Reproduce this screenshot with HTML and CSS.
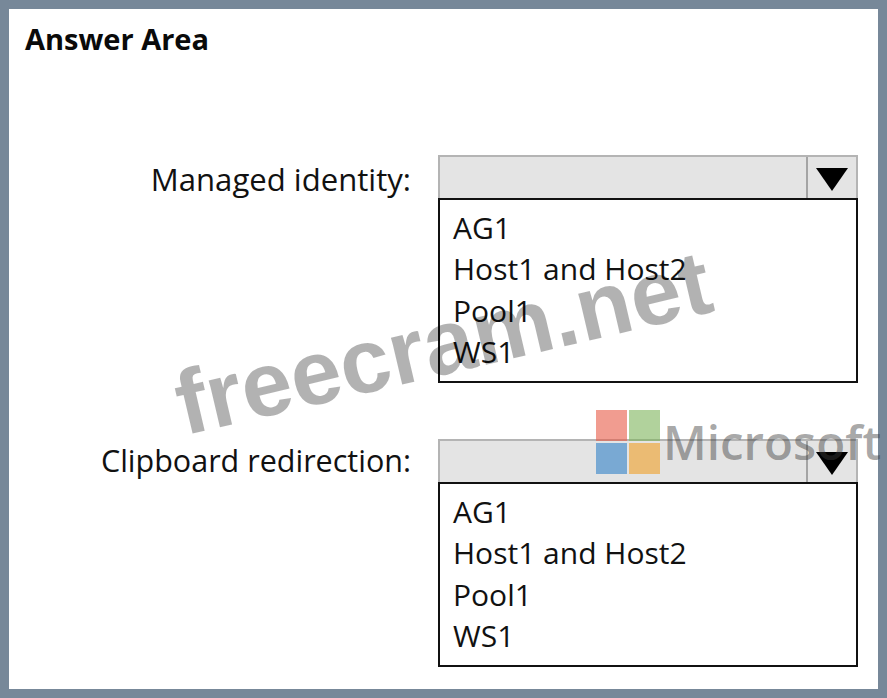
FILE: index.html
```html
<!DOCTYPE html>
<html lang="en">
<head>
    <meta charset="UTF-8">
    <meta name="viewport" content="width=device-width, initial-scale=1.0">
    <title>Answer Area</title>
    <link rel="stylesheet" href="styles.css">
</head>
<body>
    <div class="frame">
        <h1>Answer Area</h1>

        <div class="answer-row first">
            <div class="label">Managed identity:</div>
            <div class="dropdown">
                <div class="dropdown-head">
                    <div class="dropdown-arrow"><span class="arrow"></span></div>
                </div>
                <ul class="dropdown-list">
                    <li>AG1</li>
                    <li>Host1 and Host2</li>
                    <li>Pool1</li>
                    <li>WS1</li>
                </ul>
            </div>
        </div>

        <div class="answer-row second">
            <div class="label">Clipboard redirection:</div>
            <div class="dropdown">
                <div class="dropdown-head">
                    <div class="dropdown-arrow"><span class="arrow"></span></div>
                </div>
                <ul class="dropdown-list">
                    <li>AG1</li>
                    <li>Host1 and Host2</li>
                    <li>Pool1</li>
                    <li>WS1</li>
                </ul>
            </div>
        </div>
    </div>

    <!-- Watermarks over the picture -->
    <div class="watermark">freecram.net</div>
    <div class="ms-logo">
        <div class="ms-squares">
            <span class="sq red"></span>
            <span class="sq green"></span>
            <span class="sq blue"></span>
            <span class="sq yellow"></span>
        </div>
        <span class="ms-name">Microsoft</span>
    </div>
</body>
</html>
```

FILE: styles.css
```css
html, body {
    height: 100%;
}

body {
    margin: 0;
    font-family: "Open Sans", "Noto Sans", Arial, sans-serif;
    color: #111;
    background-color: #fff;
    overflow: hidden;
}

.frame {
    box-sizing: border-box;
    width: 887px;
    height: 698px;
    border: 9px solid #778899;
    padding: 11px 20px 0 0;
    background-color: #fff;
}

h1 {
    margin: 0 0 98px 16px;
    font-size: 29px;
    line-height: 37px;
    font-weight: 700;
    color: #0a0a0a;
}

.answer-row {
    display: flex;
    gap: 27px;
}

.answer-row.second {
    margin-top: 56px;
}

.label {
    width: 402px;
    height: 43px;
    line-height: 49px;
    text-align: right;
    font-size: 30.5px;
    white-space: nowrap;
}

.first .label {
    font-size: 31.1px;
}

.second .label {
    line-height: 43px;
}

.dropdown {
    width: 420px;
}

.dropdown-head {
    box-sizing: border-box;
    display: flex;
    justify-content: flex-end;
    height: 43px;
    background-color: #e4e4e4;
    border: 2px solid #b4b4b4;
    border-bottom: none;
}

.dropdown-arrow {
    display: flex;
    justify-content: center;
    padding-top: 11px;
    width: 50px;
    border-left: 2px solid #a4a4a4;
    box-sizing: border-box;
}

.arrow {
    width: 0;
    height: 0;
    border-left: 16px solid transparent;
    border-right: 16px solid transparent;
    border-top: 23px solid #000;
}

.dropdown-list {
    box-sizing: border-box;
    list-style: none;
    margin: 0;
    padding: 7px 0 0 13px;
    height: 185px;
    background-color: #fff;
    border: 2px solid #111;
    font-size: 30px;
    line-height: 41.4px;
}

.watermark {
    position: absolute;
    left: 170px;
    top: 293px;
    font-family: "Liberation Sans", Arial, sans-serif;
    font-weight: 700;
    font-size: 91px;
    line-height: 100px;
    white-space: nowrap;
    color: rgba(0, 0, 0, 0.3);
    transform: rotate(-13.2deg);
}

.ms-logo {
    position: absolute;
    left: 596px;
    top: 410px;
    display: flex;
    align-items: center;
    gap: 3px;
}

.ms-squares {
    display: grid;
    grid-template-columns: 31px 31px;
    grid-auto-rows: 31px;
    gap: 2px;
}

.sq {
    display: block;
}

.red { background-color: rgba(232, 90, 70, 0.6); }
.green { background-color: rgba(125, 180, 90, 0.6); }
.blue { background-color: rgba(50, 130, 200, 0.6); }
.yellow { background-color: rgba(240, 160, 40, 0.6); }

.ms-name {
    font-size: 47.5px;
    line-height: 56px;
    font-weight: 600;
    color: rgba(60, 60, 60, 0.45);
    white-space: nowrap;
}
```
